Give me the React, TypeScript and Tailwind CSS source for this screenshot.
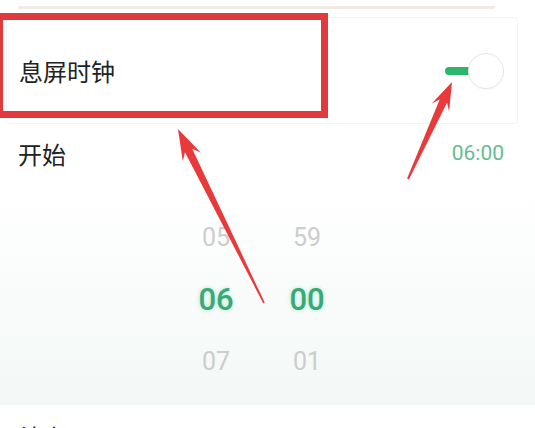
import React from "react";

type Pt = [number, number];

// tapered arrow pointing from tail to tip
const arrowPoints = (tip: Pt, tail: Pt, len = 31, half = 10, neck = 4, end = 0.8) => {
  const dx = tail[0] - tip[0];
  const dy = tail[1] - tip[1];
  const d = Math.hypot(dx, dy);
  const ux = dx / d;
  const uy = dy / d;
  const nx = -uy;
  const ny = ux;
  const at = (k: number, w: number): string =>
    `${(tip[0] + ux * k + nx * w).toFixed(1)},${(tip[1] + uy * k + ny * w).toFixed(1)}`;
  return [
    `${tip[0]},${tip[1]}`,
    at(len, half),
    at(len - 7, neck),
    at(d, end),
    at(d, -end),
    at(len - 7, -neck),
    at(len, -half),
  ].join(" ");
};

const cjk = { fontFamily: '"Noto Sans CJK SC", "Noto Sans", sans-serif' };
const num = { fontFamily: 'Roboto, "Noto Sans", sans-serif' };

const PickerCol = ({ prev, cur, next }: { prev: string; cur: string; next: string }) => (
  <div className="flex w-[60px] flex-col items-center">
    <div className="flex h-[62px] items-center text-[25px] text-[#cdcdcd]">{prev}</div>
    <div className="flex h-[62px] items-center text-[31px] font-medium text-[#3aa877] [text-shadow:0_0_4px_rgba(70,210,150,0.45)]">
      {cur}
    </div>
    <div className="flex h-[62px] items-center text-[25px] text-[#cdcdcd]">{next}</div>
  </div>
);

export default function App() {
  return (
    <div className="relative h-[428px] w-[535px] overflow-hidden bg-white" style={cjk}>
      {/* bottom edge of previous card */}
      <div className="px-[18px] pt-[6px]">
        <div className="h-[3px] w-[477px] rounded-full bg-[#f1e9e4]" />
      </div>

      {/* 息屏时钟 row */}
      <div className="ml-[6px] mt-[8px] flex h-[107px] w-[512px] items-center justify-between rounded-[4px] border border-[#f4f4f4] pl-[12px] pr-[13px]">
        <span className="text-[24px] leading-none text-[#222]">息屏时钟</span>
        <div className="flex items-center">
          <div className="h-[8px] w-[26px] rounded-l-full bg-[#2fb46c]" />
          <div className="ml-[-3px] h-[36px] w-[36px] rounded-full border border-[#e6e6e6] bg-white shadow-[0_1px_2px_rgba(0,0,0,0.04)]" />
        </div>
      </div>

      {/* 开始 row */}
      <div className="flex h-[60px] items-center justify-between pl-[18px] pr-[31px]">
        <span className="text-[24px] leading-none text-[#222]">开始</span>
        <span className="text-[21px] text-[#62bd96]" style={num}>
          06:00
        </span>
      </div>

      {/* time picker */}
      <div className="flex h-[221px] bg-gradient-to-b from-white to-[#f3f8f6] pl-[186px] pt-[23px]" style={num}>
        <div className="flex gap-[31px]">
          <PickerCol prev="05" cur="06" next="07" />
          <PickerCol prev="59" cur="00" next="01" />
        </div>
      </div>

      {/* 结束 row, cut off by the screenshot edge */}
      <div className="flex h-[64px] items-center pl-[18px]">
        <span className="text-[24px] leading-none text-[#222]">结束</span>
      </div>

      {/* annotation box */}
      <div className="absolute left-[-4px] top-[13px] h-[105px] w-[332px] border-[7px] border-[#e13a3e]" />

      {/* annotation arrows */}
      <svg className="pointer-events-none absolute left-0 top-0" width="535" height="428" viewBox="0 0 535 428">
        <polygon points={arrowPoints([178, 129], [264, 303])} fill="#e8393b" />
        <polygon points={arrowPoints([452, 82], [408, 179], 28, 9.5, 4, 1)} fill="#e8393b" />
      </svg>
    </div>
  );
}
